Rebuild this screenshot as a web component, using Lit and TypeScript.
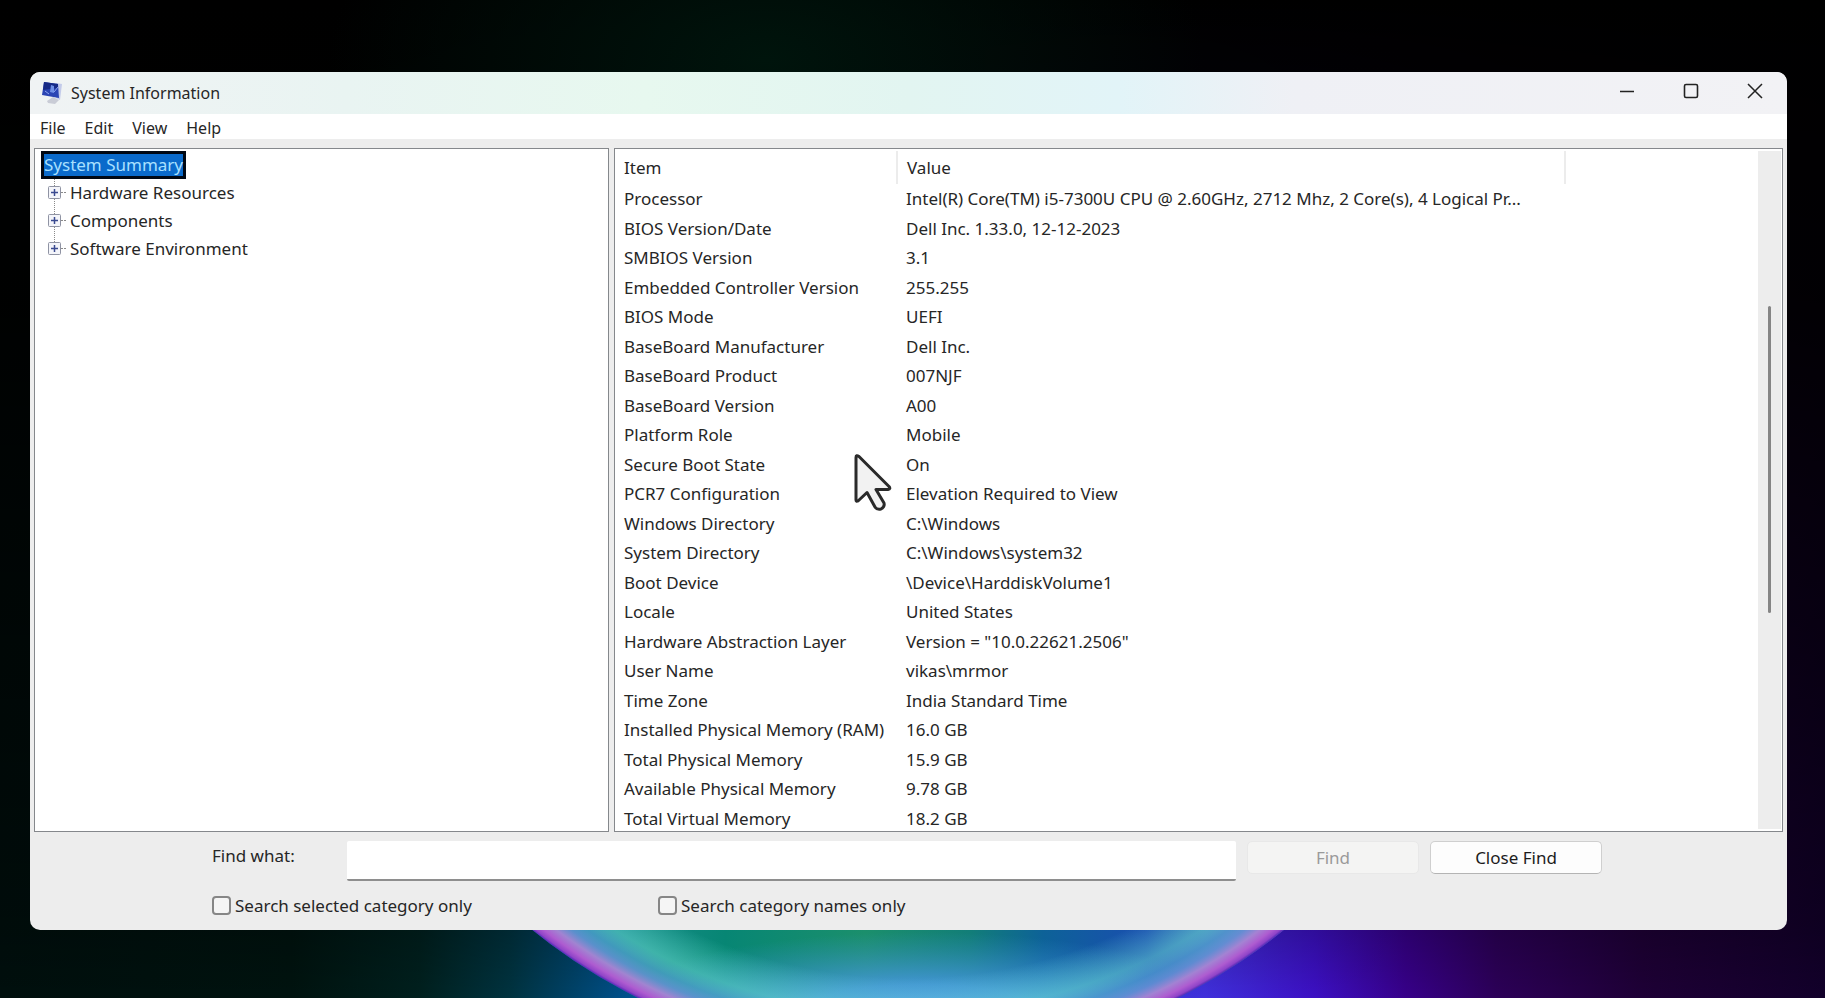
import { LitElement, html, css, svg } from "lit";
import { customElement, state } from "lit/decorators.js";

const ROWS: [string, string][] = [
  ["Processor", "Intel(R) Core(TM) i5-7300U CPU @ 2.60GHz, 2712 Mhz, 2 Core(s), 4 Logical Pr..."],
  ["BIOS Version/Date", "Dell Inc. 1.33.0, 12-12-2023"],
  ["SMBIOS Version", "3.1"],
  ["Embedded Controller Version", "255.255"],
  ["BIOS Mode", "UEFI"],
  ["BaseBoard Manufacturer", "Dell Inc."],
  ["BaseBoard Product", "007NJF"],
  ["BaseBoard Version", "A00"],
  ["Platform Role", "Mobile"],
  ["Secure Boot State", "On"],
  ["PCR7 Configuration", "Elevation Required to View"],
  ["Windows Directory", "C:\\Windows"],
  ["System Directory", "C:\\Windows\\system32"],
  ["Boot Device", "\\Device\\HarddiskVolume1"],
  ["Locale", "United States"],
  ["Hardware Abstraction Layer", 'Version = "10.0.22621.2506"'],
  ["User Name", "vikas\\mrmor"],
  ["Time Zone", "India Standard Time"],
  ["Installed Physical Memory (RAM)", "16.0 GB"],
  ["Total Physical Memory", "15.9 GB"],
  ["Available Physical Memory", "9.78 GB"],
  ["Total Virtual Memory", "18.2 GB"],
];

const BRANCHES = ["Hardware Resources", "Components", "Software Environment"];

@customElement("desktop-wallpaper")
export class DesktopWallpaper extends LitElement {
  static styles = css`
    :host {
      position: absolute;
      inset: 0;
      overflow: hidden;
      background: #000;
    }
    svg {
      display: block;
      width: 100%;
      height: 100%;
    }
  `;

  render() {
    return html`
      <svg viewBox="0 0 1825 998" preserveAspectRatio="xMidYMax slice" aria-hidden="true">
        ${svg`
        <defs>
          <linearGradient id="floor" x1="0" x2="1">
            <stop offset="0" stop-color="#000f0d"/>
            <stop offset=".16" stop-color="#00130f"/>
            <stop offset=".23" stop-color="#00201e"/>
            <stop offset=".28" stop-color="#003340"/>
            <stop offset=".35" stop-color="#005494"/>
            <stop offset=".5" stop-color="#2040c8"/>
            <stop offset=".66" stop-color="#4030dc"/>
            <stop offset=".72" stop-color="#3c10c4"/>
            <stop offset=".77" stop-color="#37008a"/>
            <stop offset=".82" stop-color="#2c0058"/>
            <stop offset=".9" stop-color="#1e0036"/>
            <stop offset="1" stop-color="#12002a"/>
          </linearGradient>
          <linearGradient id="shade" x1="0" x2="0" y1="0" y2="1">
            <stop offset="0" stop-color="#000"/>
            <stop offset=".3" stop-color="#000" stop-opacity=".92"/>
            <stop offset=".7" stop-color="#000" stop-opacity=".5"/>
            <stop offset=".93" stop-color="#000" stop-opacity=".22"/>
            <stop offset="1" stop-color="#000" stop-opacity="0"/>
          </linearGradient>
          <radialGradient id="moss" cx=".42" cy=".06" r=".24">
            <stop offset="0" stop-color="#00140c"/>
            <stop offset="1" stop-color="#00140c" stop-opacity="0"/>
          </radialGradient>
          <linearGradient id="disc" gradientUnits="userSpaceOnUse" x1="540" y1="0" x2="1280" y2="0">
            <stop offset="0" stop-color="#1a7aa8"/>
            <stop offset=".15" stop-color="#148a84"/>
            <stop offset=".25" stop-color="#078674"/>
            <stop offset=".44" stop-color="#1b8f6c"/>
            <stop offset=".58" stop-color="#127e78"/>
            <stop offset=".68" stop-color="#0d6298"/>
            <stop offset=".82" stop-color="#1a4eb0"/>
            <stop offset=".9" stop-color="#3570b8"/>
            <stop offset="1" stop-color="#6a70c4"/>
          </linearGradient>
          <radialGradient id="glow" gradientUnits="userSpaceOnUse" cx="0" cy="0" r="1"
            gradientTransform="translate(920 1020) scale(330 88)">
            <stop offset="0" stop-color="#5c9cf4"/>
            <stop offset=".4" stop-color="#4a98e4" stop-opacity=".85"/>
            <stop offset="1" stop-color="#3a90d0" stop-opacity="0"/>
          </radialGradient>
          <radialGradient id="rim" gradientUnits="userSpaceOnUse" cx="908" cy="461" r="601">
            <stop offset=".86" stop-color="#70e8d8" stop-opacity="0"/>
            <stop offset=".92" stop-color="#6adcd0" stop-opacity=".5"/>
            <stop offset=".945" stop-color="#58a4d4" stop-opacity=".65"/>
            <stop offset=".96" stop-color="#6a94d8" stop-opacity=".8"/>
            <stop offset=".975" stop-color="#a884d4" stop-opacity=".95"/>
            <stop offset=".988" stop-color="#ae5cd0"/>
            <stop offset=".996" stop-color="#9044c8"/>
            <stop offset="1" stop-color="#5028b8"/>
          </radialGradient>
        </defs>
        <rect width="1825" height="998" fill="url(#floor)"/>
        <rect width="1825" height="998" fill="url(#shade)"/>
        <rect width="1825" height="998" fill="url(#moss)"/>
        <circle cx="908" cy="461" r="601" fill="url(#disc)" clip-path="inset(440px 0 0 0)"/>
        <circle cx="908" cy="461" r="601" fill="url(#glow)"/>
        <circle cx="908" cy="461" r="601" fill="url(#rim)" clip-path="inset(440px 0 0 0)"/>
        `}
      </svg>
    `;
  }
}

@customElement("category-tree")
export class CategoryTree extends LitElement {
  static styles = css`
    :host {
      display: block;
      padding: 2px 6px;
    }
    ul {
      list-style: none;
      margin: 0;
      padding: 0;
    }
    button {
      font: inherit;
      color: inherit;
      background: none;
      border: 0;
      padding: 0;
      white-space: nowrap;
    }
    .root {
      display: block;
      height: 28px;
      line-height: 22px;
      border: 3px solid #000814;
      background: #0a6acb;
      color: #a8e0ff;
    }
    .branch {
      display: grid;
      grid-template-columns: 29px auto;
      justify-content: start;
      align-items: center;
      height: 28px;
    }
    svg {
      display: block;
    }
  `;

  render() {
    return html`
      <button class="root">System Summary</button>
      <ul>
        ${BRANCHES.map(
          (name, i) => html`<li class="branch">
            <svg width="29" height="28" viewBox="0 0 29 28" fill="none" aria-hidden="true">
              <path
                d=${i < BRANCHES.length - 1 ? "M13.5 0V28" : "M13.5 0V14"}
                stroke="#8a8a8a"
                stroke-dasharray="1 1"
              />
              <path d="M20 13.5h6" stroke="#8a8a8a" stroke-dasharray="2 1" />
              <rect x="7.500" y="7.500" width="12" height="12" rx="1" fill="#f4f5fa" stroke="#8f93a3" />
              <path d="M10 13.500h7M13.500 10v7" stroke="#3a4a90" stroke-width="1.500" />
            </svg>
            <button>${name}</button>
          </li>`
        )}
      </ul>
    `;
  }
}

@customElement("detail-list")
export class DetailList extends LitElement {
  static styles = css`
    :host {
      display: grid;
      grid-template-columns: minmax(0, 1fr) 23px;
      height: 100%;
      box-sizing: border-box;
      padding: 2px 1px 0 0;
    }
    .view {
      overflow: hidden;
    }
    table {
      width: 100%;
      table-layout: fixed;
      border-collapse: collapse;
      text-align: left;
    }
    .item {
      width: 282px;
    }
    .value {
      width: 668px;
    }
    th,
    td {
      box-sizing: border-box;
      padding: 0 0 0 9px;
      font-weight: 400;
      white-space: nowrap;
    }
    th {
      height: 33px;
      border-right: 2px solid #ececec;
    }
    th:last-child {
      border-right: 0;
    }
    tbody tr {
      height: 29px;
    }
    tbody tr:nth-child(odd) {
      height: 30px;
    }
    tbody tr:last-child td {
      height: 26px;
      vertical-align: bottom;
    }
    tbody tr:last-child {
      height: 26px;
    }
    .track {
      display: flex;
      flex-direction: column;
      align-items: center;
      margin-bottom: 2px;
      background: #ededed;
    }
    .before {
      flex: 156;
    }
    .thumb {
      flex: 308;
      width: 3px;
      border-radius: 2px;
      background: #858585;
    }
    .after {
      flex: 217;
    }
  `;

  render() {
    return html`
      <div class="view">
        <table>
          <colgroup>
            <col class="item" />
            <col class="value" />
            <col />
          </colgroup>
          <thead>
            <tr>
              <th scope="col">Item</th>
              <th scope="col">Value</th>
              <th></th>
            </tr>
          </thead>
          <tbody>
            ${ROWS.map(([k, v]) => html`<tr><td>${k}</td><td>${v}</td><td></td></tr>`)}
          </tbody>
        </table>
      </div>
      <div class="track">
        <div class="before"></div>
        <div class="thumb"></div>
        <div class="after"></div>
      </div>
    `;
  }
}

@customElement("find-bar")
export class FindBar extends LitElement {
  @state() private query = "";

  static styles = css`
    :host {
      display: block;
      padding: 9px 185px 0 182px;
      height: 98px;
      box-sizing: border-box;
    }
    .line {
      display: grid;
      grid-template-columns: 124px minmax(0, 1fr) 172px 172px;
      column-gap: 11px;
      height: 52px;
      align-items: start;
    }
    .name {
      line-height: 30px;
    }
    .text {
      height: 40px;
      box-sizing: border-box;
      border: 0;
      border-bottom: 2px solid #8e8e8e;
      border-radius: 2px;
      background: #fff;
      font: inherit;
      padding: 0 8px;
      outline: none;
    }
    .push {
      height: 33px;
      box-sizing: border-box;
      font: inherit;
      color: #1c1c1c;
      background: #fdfdfd;
      border: 1px solid #cfcfcf;
      border-bottom-color: #b4b4b4;
      border-radius: 5px;
      padding: 0;
    }
    .push:disabled {
      color: #9a9a9a;
      background: #f4f4f3;
      border-color: #e8e8e8;
    }
    .checks {
      display: grid;
      grid-template-columns: 446px auto;
      justify-content: start;
      height: 26px;
    }
    label.check {
      display: flex;
      align-items: center;
      gap: 4px;
    }
    .box {
      appearance: none;
      width: 19px;
      height: 19px;
      box-sizing: border-box;
      margin: 0 0 2px;
      border: 2px solid #868686;
      border-radius: 4px;
      background: #f5f5f5;
    }
  `;

  render() {
    return html`
      <div class="line">
        <label class="name" for="what">Find what:</label>
        <input
          class="text"
          id="what"
          type="text"
          .value=${this.query}
          @input=${(e: Event) => (this.query = (e.target as HTMLInputElement).value)}
        />
        <button class="push" ?disabled=${!this.query}>Find</button>
        <button class="push">Close Find</button>
      </div>
      <div class="checks">
        <label class="check" for="sel"><input class="box" id="sel" type="checkbox" />Search selected category only</label>
        <label class="check" for="names"><input class="box" id="names" type="checkbox" />Search category names only</label>
      </div>
    `;
  }
}

@customElement("app-root")
export class AppRoot extends LitElement {
  static styles = css`
    :host {
      display: flex;
      position: relative;
      box-sizing: border-box;
      height: 100vh;
      padding: 72px 38px 68px 30px;
      font: 17px/22px "Noto Sans", "Open Sans", sans-serif;
      color: #262626;
      background: #000;
    }
    .window {
      position: relative;
      flex: 1;
      min-width: 0;
      display: flex;
      flex-direction: column;
      border-radius: 10px;
      overflow: hidden;
      background: #ededed;
    }
    .title {
      display: flex;
      align-items: center;
      height: 42px;
      padding-left: 12px;
      gap: 9px;
      background: linear-gradient(90deg, #f0f3f4, #e9f4f2 18%, #e7f8ef 35%, #e2f5f1 50%, #e2f4f8 62%, #eff0f5 72%, #f2f2f5);
    }
    h1 {
      margin: 0;
      flex: 1;
      font-size: 16px;
      font-weight: 400;
    }
    .controls {
      display: flex;
      align-self: stretch;
    }
    .controls button {
      width: 64px;
      padding: 0 0 4px;
      border: 0;
      background: none;
      display: grid;
      place-items: center;
    }
    nav {
      display: flex;
      gap: 19px;
      height: 25px;
      padding: 2px 10px 0;
      box-sizing: border-box;
      background: #fff;
    }
    nav button {
      font: inherit;
      font-size: 16px;
      color: inherit;
      border: 0;
      padding: 0;
      background: none;
    }
    .panes {
      flex: 1;
      min-height: 0;
      display: grid;
      grid-template-columns: 575px minmax(0, 1fr);
      grid-template-rows: minmax(0, 1fr);
      gap: 5px;
      padding: 9px 4px 0;
    }
    .pane {
      box-sizing: border-box;
      border: 1px solid #85888c;
      background: #fff;
      overflow: hidden;
    }
    .pointer {
      position: absolute;
      left: 854px;
      top: 454px;
    }
  `;

  render() {
    return html`
      <desktop-wallpaper></desktop-wallpaper>
      <main class="window">
        <header class="title">
          <svg width="20" height="22" viewBox="0 0 20 22" aria-hidden="true">
            <path d="M5 19l6-4 6 3-4 4-7-1z" fill="#c9ccd6" />
            <path d="M14 1l6 1-2 16-4-2z" fill="#c3cbea" />
            <path d="M2 0l14 2 1 14L0 13z" fill="#2b45b4" />
            <path d="M2 0l14 2v4L1 8z" fill="#172a86" />
            <path d="M9 3l3 1v7l-4-1z" fill="#6f8fe6" />
            <path d="M3 9l4 3M12 10l4-5" stroke="#90a8f0" />
          </svg>
          <h1>System Information</h1>
          <div class="controls">
            <button aria-label="Minimize">
              <svg width="16" height="16" viewBox="0 0 16 16"><path d="M1 8.500h14" stroke="#222" stroke-width="1.600" /></svg>
            </button>
            <button aria-label="Maximize">
              <svg width="16" height="16" viewBox="0 0 16 16" fill="none"><rect x="1.500" y="1.500" width="13" height="13" rx="1.500" stroke="#222" stroke-width="1.600" /></svg>
            </button>
            <button aria-label="Close">
              <svg width="16" height="16" viewBox="0 0 16 16"><path d="M1 1l14 14M15 1L1 15" stroke="#222" stroke-width="1.500" /></svg>
            </button>
          </div>
        </header>
        <nav>${["File", "Edit", "View", "Help"].map((m) => html`<button>${m}</button>`)}</nav>
        <div class="panes">
          <div class="pane"><category-tree></category-tree></div>
          <div class="pane"><detail-list></detail-list></div>
        </div>
        <find-bar></find-bar>
      </main>
      <svg class="pointer" width="38" height="58" viewBox="0 0 38 58" aria-hidden="true">
        <path
          d="M2 3.500V46q0 2 2 1L13 38.500 21 53q2 3 6 2 4-2 3-6L22 35.500H34q3-.5 1-3L5 2.500q-3-2-3 1z"
          fill="#f2f2f2"
          stroke="#2a2a2a"
          stroke-width="3"
          stroke-linejoin="round"
        />
      </svg>
    `;
  }
}
